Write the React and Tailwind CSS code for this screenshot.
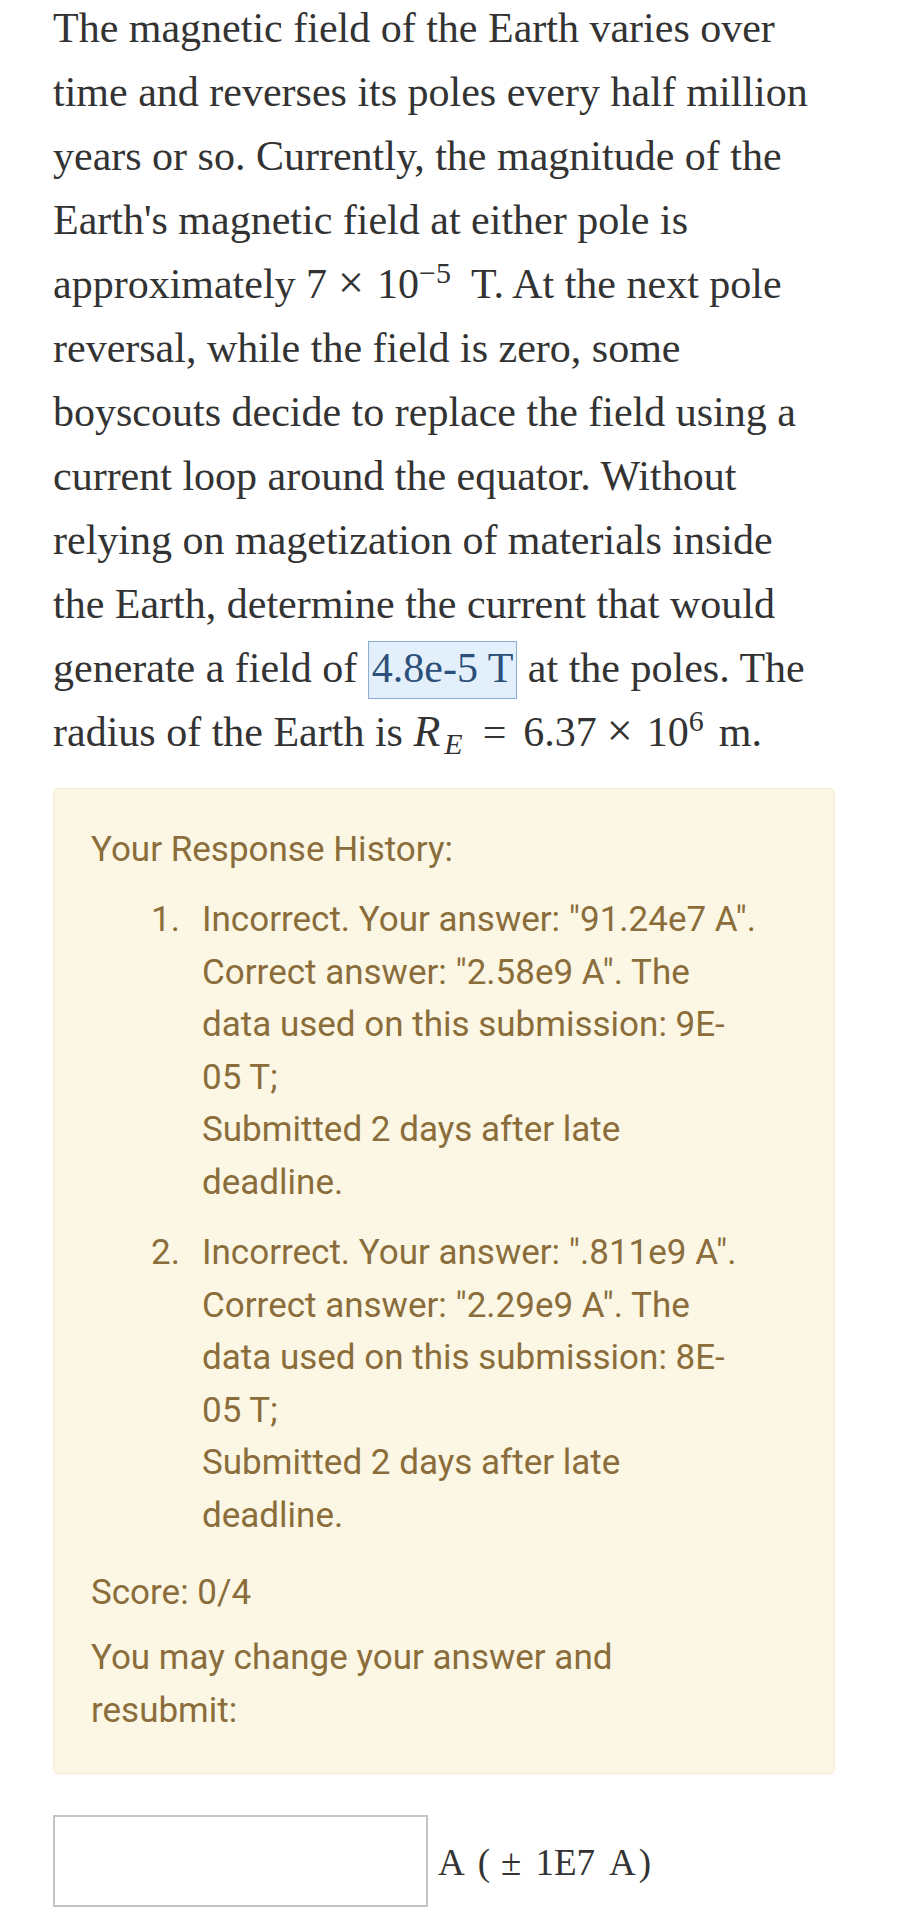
import React from 'react';

const serif = { fontFamily: '"Liberation Serif", "Times New Roman", serif' };

const attempts = [
  {
    n: '1.',
    lines: [
      'Incorrect. Your answer: "91.24e7 A".',
      'Correct answer: "2.58e9 A". The',
      'data used on this submission: 9E-',
      '05 T;',
      'Submitted 2 days after late',
      'deadline.',
    ],
  },
  {
    n: '2.',
    lines: [
      'Incorrect. Your answer: ".811e9 A".',
      'Correct answer: "2.29e9 A". The',
      'data used on this submission: 8E-',
      '05 T;',
      'Submitted 2 days after late',
      'deadline.',
    ],
  },
];

const Lines = ({ lines }) =>
  lines.map((l, i) => (
    <React.Fragment key={i}>
      {l}
      {i < lines.length - 1 && <br />}
    </React.Fragment>
  ));

// math operator with TeX-like spacing
const Op = ({ children, l, r }) => (
  <span className={`inline-block leading-[0] ${l} ${r}`}>{children}</span>
);

export default function App() {
  return (
    <div className="w-[901px] min-h-[1920px] bg-white pl-[53px] pr-[66px] overflow-hidden">
      {/* Question text */}
      <p
        className="mt-[-4px] text-[42px] leading-[64px] text-[#333] whitespace-nowrap"
        style={serif}
      >
        The magnetic field of the Earth varies over<br />
        time and reverses its poles every half million<br />
        years or so. Currently, the magnitude of the<br />
        Earth's magnetic field at either pole is<br />
        approximately 7
        <Op l="ml-[11px]" r="mr-[13px]">
          <span className="text-[46px]">×</span>
        </Op>
        10<sup className="text-[30px] top-[-15px]">−5</sup>
        <span className="ml-[20px]">T.</span> At the next pole<br />
        reversal, while the field is zero, some<br />
        boyscouts decide to replace the field using a<br />
        current loop around the equator. Without<br />
        relying on magetization of materials inside<br />
        the Earth, determine the current that would<br />
        generate a field of{' '}
        <span className="inline-block h-[58px] px-[3px] border border-[#8aaed2] bg-[#e3effb] text-[#2c5079] leading-[52px] align-baseline">
          4.8e-5 T
        </span>{' '}
        at the poles. The<br />
        radius of the Earth is <i className="text-[44px]">R</i>
        <sub className="ml-[4px] text-[30px] bottom-[-8px]">
          <i>E</i>
        </sub>
        <Op l="ml-[20px]" r="mr-[17px]">=</Op>
        6.37
        <Op l="ml-[10px]" r="mr-[14px]">
          <span className="text-[46px]">×</span>
        </Op>
        10<sup className="text-[30px] top-[-15px]">6</sup>
        <span className="ml-[15px]">m.</span>
      </p>

      {/* Response history */}
      <div
        className="mt-[24px] rounded-[5px] border border-[#f6ebcf] bg-[#fcf7e4] pl-[37px] pr-[30px] pt-[35px] pb-[36px] text-[35px] leading-[52.5px] text-[#8a6d3b] whitespace-nowrap"
        style={{ fontFamily: 'Roboto, "Liberation Sans", sans-serif' }}
      >
        <p>Your Response History:</p>
        <ol className="mt-[17.5px] flex flex-col gap-[18px]">
          {attempts.map((a) => (
            <li key={a.n} className="flex">
              <span className="w-[111px] shrink-0 pr-[22px] text-right">{a.n}</span>
              <span>
                <Lines lines={a.lines} />
              </span>
            </li>
          ))}
        </ol>
        <p className="mt-[25px]">Score: 0/4</p>
        <p className="mt-[12.5px]">
          You may change your answer and
          <br />
          resubmit:
        </p>
      </div>

      {/* Answer input */}
      <div className="mt-[41px] flex items-center">
        <input
          type="text"
          className="h-[92px] w-[375px] border-2 border-[#c4c4c4] bg-white outline-none"
        />
        <span className="ml-[10px] pt-[4px] text-[37px] text-[#333] whitespace-nowrap" style={serif}>
          A<span className="ml-[13px]">(</span>
          <span className="ml-[11px]">±</span>
          <span className="ml-[14px]">1E7</span>
          <span className="ml-[14px]">A</span>
          <span className="ml-[3px]">)</span>
        </span>
      </div>
    </div>
  );
}
